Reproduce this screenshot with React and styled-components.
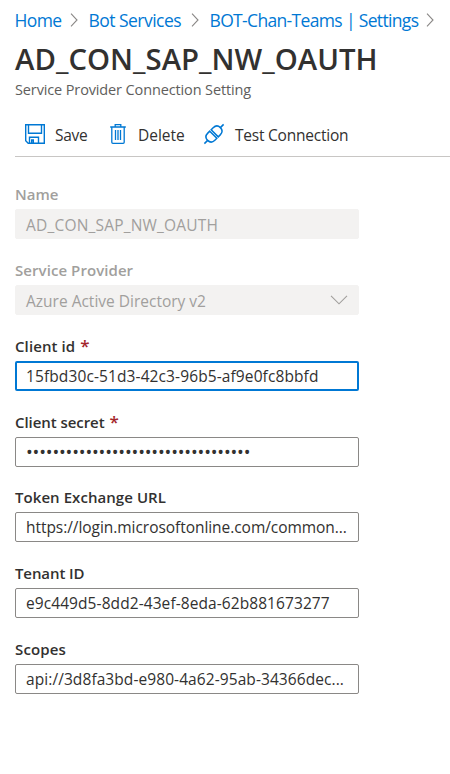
import React from "react";
import styled, { createGlobalStyle, css } from "styled-components";

const GlobalStyle = createGlobalStyle`
  * { box-sizing: border-box; }
  body { margin: 0; background: #fff; color: #323130; font-family: "Open Sans", "Noto Sans", sans-serif; }
`;

const Page = styled.main`
  width: 450px;
  height: 774px;
  padding-left: 15px;
  overflow: hidden;
`;

const Breadcrumb = styled.nav`
  display: grid;
  grid-template-columns: 74px 121px 235px;
  height: 39px;
  align-items: center;
`;

const Crumb = styled.div`
  display: flex;
  align-items: center;
  justify-content: space-between;
  margin-left: -0.5px;
  padding-right: 11px;
  svg { flex: none; }
`;

const CrumbLink = styled.a`
  color: #0078d4;
  font-size: 17.5px;
  line-height: 24px;
  letter-spacing: ${(p) => p.$track}px;
  white-space: nowrap;
`;

const Title = styled.h1`
  margin: 0;
  height: 39px;
  font-size: 29.3px;
  line-height: 40px;
  font-weight: 600;
  letter-spacing: 0.03px;
  white-space: nowrap;
`;

const Subtitle = styled.div`
  height: 34px;
  font-size: 14.5px;
  line-height: 24px;
  letter-spacing: -0.13px;
  color: #605e5c;
`;

const Toolbar = styled.div`
  display: flex;
  height: 45px;
  padding: 11px 0 0 9px;
  border-bottom: 1px solid #c8c6c4;
`;

const Command = styled.button`
  display: flex;
  align-items: center;
  gap: ${(p) => p.$gap}px;
  width: ${(p) => p.$width}px;
  height: 22px;
  padding: 0;
  border: 0;
  background: none;
  color: #323130;
  font: 400 15.5px/22px "Open Sans", "Noto Sans", sans-serif;
  letter-spacing: ${(p) => p.$track}px;
  white-space: nowrap;
  svg { flex: none; }
`;

const CommandText = styled.span`
  padding-top: 2px;
`;

const Form = styled.form`
  padding-top: 26.2px;
`;

const Field = styled.div`
  height: 75.8px;
`;

const Label = styled.label`
  display: block;
  height: 26px;
  font-size: 15px;
  line-height: 23px;
  font-weight: 600;
  letter-spacing: ${(p) => p.$track}px;
  color: ${(p) => (p.$disabled ? "#a19f9d" : "#323130")};
`;

const Required = styled.span`
  margin-left: 5px;
  color: #a4262c;
  font-size: 17px;
  line-height: 1;
`;

const disabledBox = css`
  background: #f3f2f1;
  border-color: #f3f2f1;
  color: #a19f9d;
`;

const focusedBox = css`
  border: 2px solid #0078d4;
  padding: 0 9px;
`;

const InputBox = styled.div`
  display: flex;
  align-items: center;
  justify-content: space-between;
  width: 344px;
  height: 30px;
  padding: 0 10px;
  border: 1px solid #8a8886;
  border-radius: 2px;
  ${(p) => p.$state === "disabled" && disabledBox}
  ${(p) => p.$state === "focused" && focusedBox}
`;

const Value = styled.span`
  font-size: ${(p) => (p.$secret ? 18 : 15.5)}px;
  line-height: 24px;
  padding-top: ${(p) => (p.$low ? 2 : 0)}px;
  letter-spacing: ${(p) => p.$track}px;
  white-space: nowrap;
`;

const CrumbChevron = () => (
  <svg width="8" height="14" viewBox="0 0 8 14" fill="none" stroke="#8a8886" strokeWidth="1.1">
    <path d="M1 .7 7 7 1 13.3" />
  </svg>
);

const DropChevron = () => (
  <svg width="18" height="10" viewBox="0 0 18 10" fill="none" stroke="#a19f9d" strokeWidth="1.1">
    <path d="M1 .8 9 8.8 17 .8" />
  </svg>
);

const SaveIcon = () => (
  <svg width="22" height="22" viewBox="0 0 22 22" fill="none" stroke="#0078d4" strokeWidth="1.4">
    <path d="M1.7 1.7H20.3V20.3H4.2L1.7 17.8Z" />
    <path d="M4.5 1.7V10.3H17.5V1.7" />
    <path d="M5.5 20V14.3H14.5V20M9.3 20V17H7.7V20" />
  </svg>
);

const TrashIcon = () => (
  <svg width="18" height="22" viewBox="0 0 18 22" fill="none" stroke="#0078d4" strokeWidth="1.3">
    <path d="M1.2 4H16.8M6.2 4V1.6H11.8V4M2.8 4V19.3Q2.8 20.4 3.9 20.4H14.1Q15.2 20.4 15.2 19.3V4" />
    <path d="M6.5 7V17M9 7V17M11.5 7V17" />
  </svg>
);

const PlugIcon = () => (
  <svg width="22" height="22" viewBox="0 0 22 22" fill="none" stroke="#0078d4" strokeWidth="1.5">
    <g transform="rotate(-45 11 11)">
      <path d="M-2.6 11H2M20 11H24.6" />
      <path d="M10 6V16H7.2C4 16 2 14 2 11S4 6 7.2 6Z" />
      <path d="M12 6V16H14.8C18 16 20 14 20 11S18 6 14.8 6Z" />
    </g>
  </svg>
);

const crumbs = [
  { text: "Home", track: -0.6 },
  { text: "Bot Services", track: -0.53 },
  { text: "BOT-Chan-Teams | Settings", track: -0.66 },
];

const fields = [
  { label: "Name", value: "AD_CON_SAP_NW_OAUTH", state: "disabled", low: true, labelTrack: 0, track: 0.2 },
  { label: "Service Provider", value: "Azure Active Directory v2", state: "disabled", low: true, dropdown: true, labelTrack: 0.07, track: 0 },
  { label: "Client id", value: "15fbd30c-51d3-42c3-96b5-af9e0fc8bbfd", state: "focused", required: true, labelTrack: 0.1, track: 0.11 },
  { label: "Client secret", value: "•".repeat(34), secret: true, required: true, labelTrack: -0.06, track: -0.17 },
  { label: "Token Exchange URL", value: "https://login.microsoftonline.com/common...", labelTrack: 0.06, track: -0.05 },
  { label: "Tenant ID", value: "e9c449d5-8dd2-43ef-8eda-62b881673277", labelTrack: -0.1, track: 0.08 },
  { label: "Scopes", value: "api://3d8fa3bd-e980-4a62-95ab-34366dec...", labelTrack: 0.15, track: 0.08 },
];

export default function App() {
  return (
    <Page>
      <GlobalStyle />
      <Breadcrumb>
        {crumbs.map((c) => (
          <Crumb key={c.text}>
            <CrumbLink $track={c.track}>{c.text}</CrumbLink>
            <CrumbChevron />
          </Crumb>
        ))}
      </Breadcrumb>
      <Title>AD_CON_SAP_NW_OAUTH</Title>
      <Subtitle>Service Provider Connection Setting</Subtitle>
      <Toolbar>
        <Command $width={85} $gap={9} $track={-0.3}>
          <SaveIcon />
          <CommandText>Save</CommandText>
        </Command>
        <Command $width={94} $gap={11} $track={0}>
          <TrashIcon />
          <CommandText>Delete</CommandText>
        </Command>
        <Command $width={150} $gap={10} $track={-0.22}>
          <PlugIcon />
          <CommandText>Test Connection</CommandText>
        </Command>
      </Toolbar>
      <Form>
        {fields.map((f) => (
          <Field key={f.label}>
            <Label $track={f.labelTrack} $disabled={f.state === "disabled"}>
              {f.label}
              {f.required && <Required>*</Required>}
            </Label>
            <InputBox $state={f.state}>
              <Value $track={f.track} $secret={f.secret} $low={f.low}>{f.value}</Value>
              {f.dropdown && <DropChevron />}
            </InputBox>
          </Field>
        ))}
      </Form>
    </Page>
  );
}
